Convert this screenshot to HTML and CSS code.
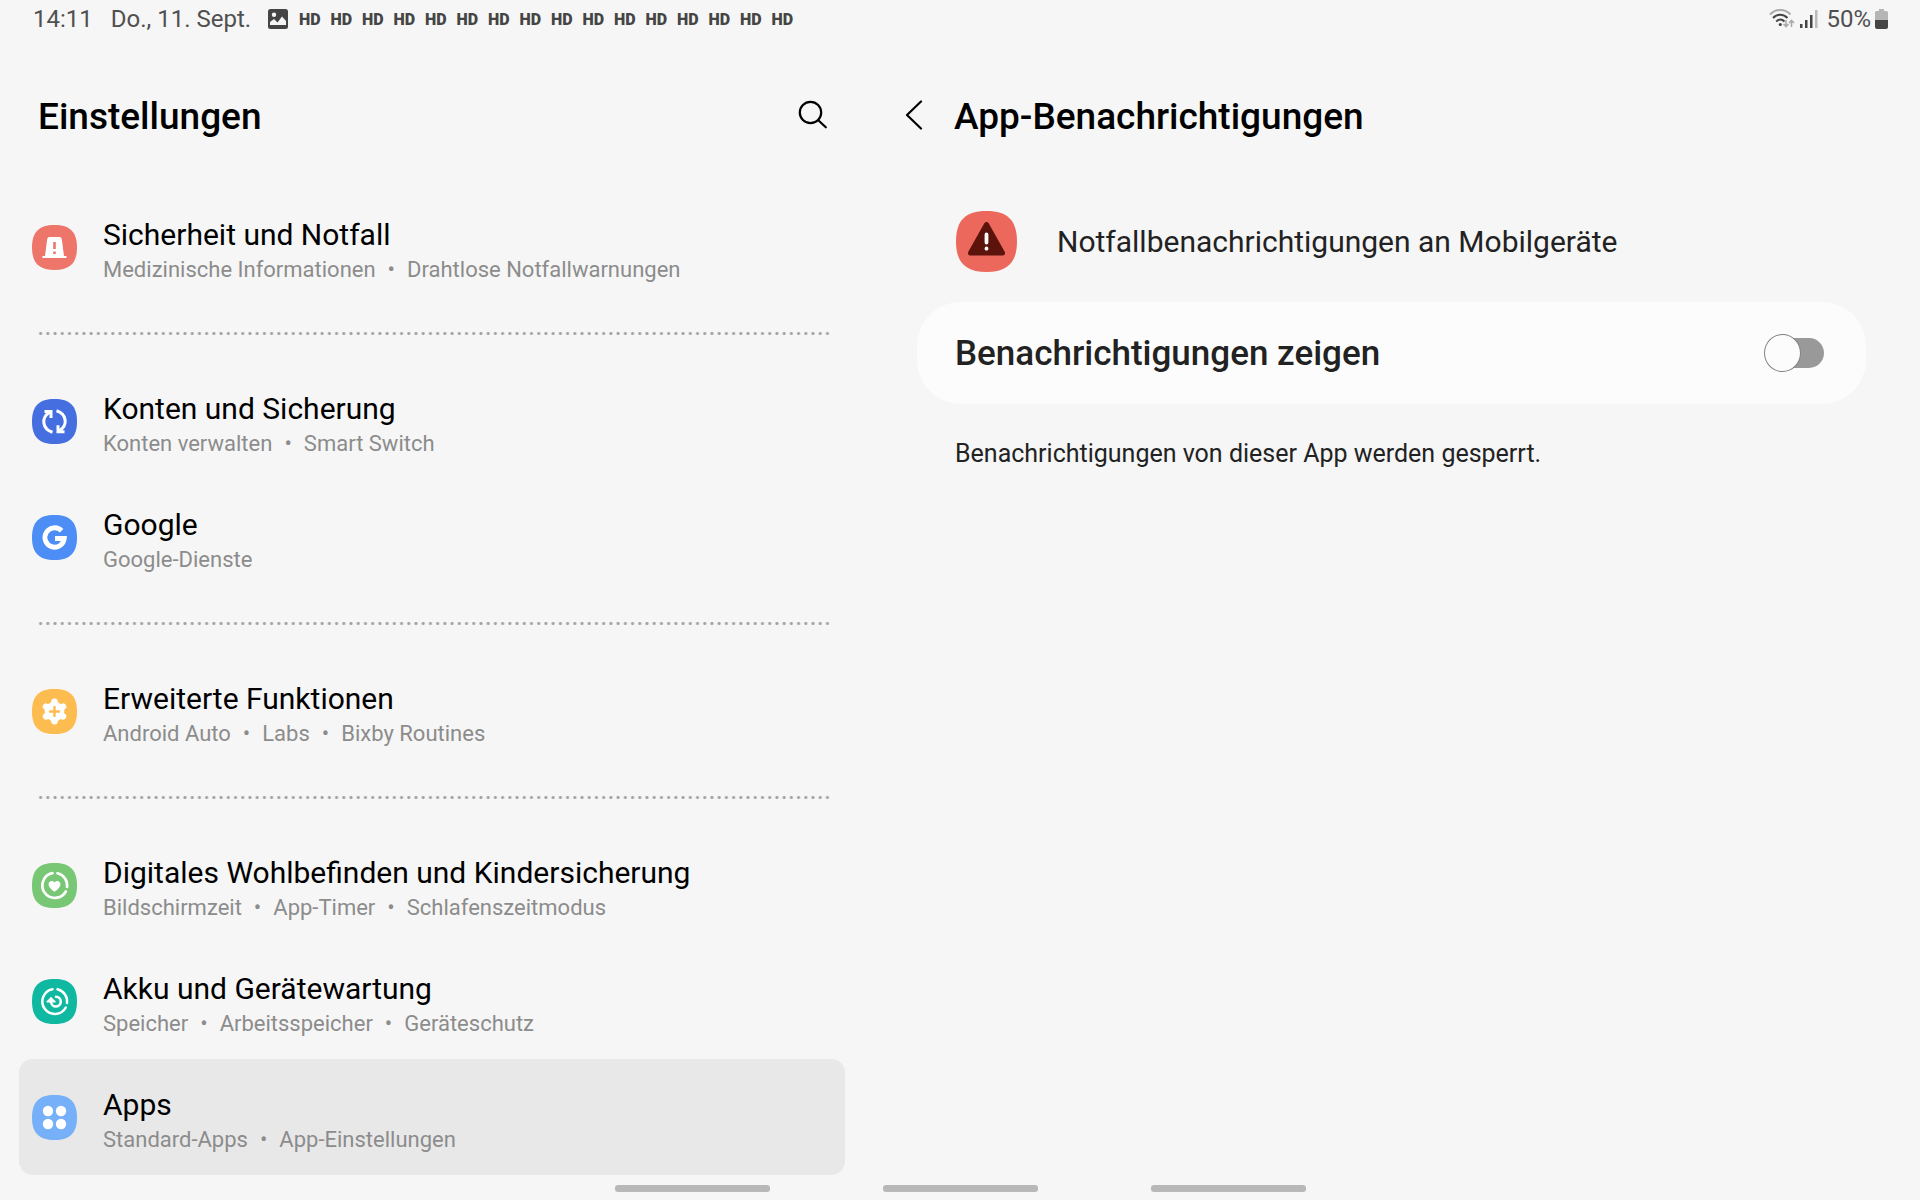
FILE: index.html
```html
<!DOCTYPE html>
<html lang="de">
<head>
<meta charset="utf-8">
<meta name="viewport" content="width=device-width, initial-scale=1">
<title>Einstellungen</title>
<link rel="stylesheet" href="styles.css">
</head>
<body>
<header class="status">
  <div class="status-side">
    <time class="clock">14:11</time>
    <span class="date">Do., 11. Sept.</span>
    <svg class="photo" width="20" height="20" viewBox="0 0 20 20" aria-hidden="true"><path fill="#454545" fill-rule="evenodd" d="M2.500 0h15A2.500 2.500 0 0 1 20 2.500v15a2.500 2.500 0 0 1-2.500 2.500h-15A2.500 2.500 0 0 1 0 17.500v-15A2.500 2.500 0 0 1 2.500 0ZM6 3.500a2.200 2.200 0 1 0 0 4.400 2.200 2.200 0 0 0 0-4.400ZM2 13v3h16v-4l-4-4.500-4.500 6L6 10Z"/></svg>
    <div class="hd-row">
      <span>HD</span><span>HD</span><span>HD</span><span>HD</span><span>HD</span><span>HD</span><span>HD</span><span>HD</span><span>HD</span><span>HD</span><span>HD</span><span>HD</span><span>HD</span><span>HD</span><span>HD</span><span>HD</span>
    </div>
  </div>
  <div class="status-side">
    <svg class="wifi" width="26" height="20" viewBox="0 0 26 20" fill="none" aria-hidden="true"><path d="M1 5.500C6.500-.5 16-.5 21.500 5.500" stroke="#aaa" stroke-width="2"/><path d="M4 9C8 4.500 14.500 4.500 18.500 9M7.200 12.500c2.500-2.700 5.800-2.700 8.300 0" stroke="#454545" stroke-width="2"/><circle cx="11.300" cy="15.500" r="1.600" fill="#454545"/><path d="M17 11v6.500m-2.500-2.500 2.500 2.500 2.500-2.500M22.500 18v-6.500M20 14l2.500-2.500L25 14" stroke="#aaa" stroke-width="1.600"/></svg>
    <svg class="signal" width="18" height="20" viewBox="0 0 18 20" aria-hidden="true"><path fill="#454545" d="M0 15h2.500v4H0zM5 11h2.500v8H5zM10 6h2.500v13H10z"/><path fill="#bbb" d="M15 1h2.500v18H15z"/></svg>
    <span>50%</span>
    <svg class="battery" width="13" height="20" viewBox="0 0 13 20" aria-hidden="true"><path fill="#b5b5b5" d="M4 0h5v2h2.500Q13 2 13 3.500V11H0V3.500Q0 2 1.500 2H4Z"/><path fill="#454545" d="M0 11h13v7q0 2-2 2H2q-2 0-2-2Z"/></svg>
  </div>
</header>
<main class="panes">
  <section class="pane-list">
    <div class="bar">
      <h1>Einstellungen</h1>
      <button class="icon-button" type="button" aria-label="Suchen"><svg width="30" height="30" viewBox="0 0 30 30" fill="none" stroke="#000" stroke-width="2.200" stroke-linecap="round" aria-hidden="true"><circle cx="12.500" cy="12.500" r="10.700"/><path d="m20.300 20.300 7.500 7"/></svg></button>
    </div>
    <nav class="menu" aria-label="Einstellungen">
      <a class="row" href="#sicherheit">
        <svg class="tile" viewBox="0 0 45 45" aria-hidden="true"><path fill="#ee756a" d="M22.500 0C38 0 45 7 45 22.500S38 45 22.500 45 0 38 0 22.500 7 0 22.500 0Z"/><path fill="#fff" d="M17.500 12h10q2 0 2.300 2l2.200 17h2.500v2h-24v-2H13l2.200-17q.3-2 2.300-2Z"/><path stroke="#ee756a" stroke-width="2.600" d="M22.500 17v7M22.500 26.500v2.600"/></svg>
        <span class="text"><span class="name">Sicherheit und Notfall</span><span class="details">Medizinische Informationen<i>•</i>Drahtlose Notfallwarnungen</span></span>
      </a>
      <hr>
      <a class="row" href="#konten">
        <svg class="tile" viewBox="0 0 45 45" aria-hidden="true"><path fill="#456fe0" d="M22.500 0C38 0 45 7 45 22.500S38 45 22.500 45 0 38 0 22.500 7 0 22.500 0Z"/><path fill="none" stroke="#fff" stroke-width="3" d="M20.500 33.200C10 30 9 18.500 17.500 13.500M24.500 11.800C35 15 36 26.500 27.500 31.500"/><path fill="none" stroke="#fff" stroke-width="3" d="M12.500 12.500H19v6.500M32.500 32.700H26v-6.500"/></svg>
        <span class="text"><span class="name">Konten und Sicherung</span><span class="details">Konten verwalten<i>•</i>Smart Switch</span></span>
      </a>
      <a class="row" href="#google">
        <svg class="tile" viewBox="0 0 45 45" aria-hidden="true"><path fill="#4d8df6" d="M22.500 0C38 0 45 7 45 22.500S38 45 22.500 45 0 38 0 22.500 7 0 22.500 0Z"/><path fill="none" stroke="#fff" stroke-width="4.800" d="M29.600 15.700A9.700 9.700 0 1 0 32.300 23.500H23"/></svg>
        <span class="text"><span class="name">Google</span><span class="details">Google-Dienste</span></span>
      </a>
      <hr>
      <a class="row" href="#erweitert">
        <svg class="tile" viewBox="0 0 45 45" aria-hidden="true"><path fill="#fdbc50" d="M22.500 0C38 0 45 7 45 22.500S38 45 22.500 45 0 38 0 22.500 7 0 22.500 0Z"/><circle cx="22.500" cy="22.500" r="9.800" fill="#fff"/><path stroke="#fff" stroke-width="6.500" stroke-linecap="round" d="M22.500 12.800v19.400M14 17.700l17 9.700M31 17.700l-17 9.700"/><path stroke="#fdbc50" stroke-width="2.400" stroke-linecap="round" d="M22.500 18v9M18 22.500h9"/></svg>
        <span class="text"><span class="name">Erweiterte Funktionen</span><span class="details">Android Auto<i>•</i>Labs<i>•</i>Bixby Routines</span></span>
      </a>
      <hr>
      <a class="row" href="#wohlbefinden">
        <svg class="tile" viewBox="0 0 45 45" aria-hidden="true"><path fill="#78c774" d="M22.500 0C38 0 45 7 45 22.500S38 45 22.500 45 0 38 0 22.500 7 0 22.500 0Z"/><path fill="none" stroke="#fff" stroke-width="2.700" stroke-linecap="round" d="M20.500 10.200A12.500 12.500 0 1 0 33.800 28.500M25.500 10.300A12.500 12.500 0 0 1 35 24"/><path fill="#fff" d="M22.500 28.800c-3.500-2.500-6-4.800-6-7.500 0-3.400 4.200-4.600 6-1.800 1.800-2.800 6-1.600 6 1.800 0 2.700-2.500 5-6 7.500Z"/></svg>
        <span class="text"><span class="name">Digitales Wohlbefinden und Kindersicherung</span><span class="details">Bildschirmzeit<i>•</i>App-Timer<i>•</i>Schlafenszeitmodus</span></span>
      </a>
      <a class="row" href="#akku">
        <svg class="tile" viewBox="0 0 45 45" aria-hidden="true"><path fill="#0fb8a0" d="M22.500 0C38 0 45 7 45 22.500S38 45 22.500 45 0 38 0 22.500 7 0 22.500 0Z"/><g fill="none" stroke="#fff" stroke-linecap="round"><path stroke-width="2.500" d="M20.500 10.200A12.500 12.500 0 1 0 33.800 28.500M25.500 10.300A12.500 12.500 0 0 1 35 24"/><path stroke-width="2.600" d="M24 17.700a4.900 4.900 0 1 1-5 5.300"/></g><path fill="#fff" d="m14.700 22.300 4.300-4.500 4.500 4.500v1.300h-8.800Z"/></svg>
        <span class="text"><span class="name">Akku und Gerätewartung</span><span class="details">Speicher<i>•</i>Arbeitsspeicher<i>•</i>Geräteschutz</span></span>
      </a>
      <a class="row selected" href="#apps" aria-current="page">
        <svg class="tile" viewBox="0 0 45 45" aria-hidden="true"><path fill="#76b0f8" d="M22.500 0C38 0 45 7 45 22.500S38 45 22.500 45 0 38 0 22.500 7 0 22.500 0Z"/><g fill="#fff"><circle cx="16" cy="16" r="5.200"/><circle cx="29" cy="16" r="5.200"/><circle cx="16" cy="29" r="5.200"/><circle cx="29" cy="29" r="5.200"/></g></svg>
        <span class="text"><span class="name">Apps</span><span class="details">Standard-Apps<i>•</i>App-Einstellungen</span></span>
      </a>
    </nav>
  </section>
  <section class="pane-detail">
    <div class="bar">
      <button class="icon-button" type="button" aria-label="Zurück"><svg width="18" height="30" viewBox="0 0 18 30" fill="none" stroke="#000" stroke-width="2.200" stroke-linecap="round" stroke-linejoin="round" aria-hidden="true"><path d="M16 1.500 2 15l14 13.500"/></svg></button>
      <h2>App-Benachrichtigungen</h2>
    </div>
    <div class="app">
      <svg width="61" height="61" viewBox="0 0 61 61" aria-hidden="true"><path fill="#ec685d" d="M30.500 0C51.500 0 61 9.500 61 30.500S51.500 61 30.500 61 0 51.500 0 30.500 9.500 0 30.500 0Z"/><path fill="#5c130c" stroke="#5c130c" stroke-width="5" stroke-linejoin="round" d="M30.500 13.500 46.500 42h-32Z"/><path stroke="#fff" stroke-width="3.800" stroke-linecap="round" d="M30.500 23.500v8M30.500 37.500v.2"/></svg>
      <span>Notfallbenachrichtigungen an Mobilgeräte</span>
    </div>
    <div class="card">
      <label for="show">Benachrichtigungen zeigen</label>
      <input class="switch" id="show" type="checkbox" role="switch">
    </div>
    <p class="note">Benachrichtigungen von dieser App werden gesperrt.</p>
  </section>
</main>
<footer class="gestures"><span></span><span></span><span></span></footer>
</body>
</html>
```
FILE: styles.css
```css
* { box-sizing: border-box; }

body {
  margin: 0;
  min-height: 100vh;
  display: flex;
  flex-direction: column;
  background: #f6f6f6;
  color: #000;
  font-family: Roboto, "Liberation Sans", sans-serif;
}

svg { display: block; flex: none; }

.status {
  display: flex;
  justify-content: space-between;
  padding: 0 32px 0 33px;
  color: #505050;
  font-size: 24px;
  line-height: 38px;
}

.status-side { display: flex; align-items: center; }
.date { margin-left: 18px; }
.photo { margin-left: 17px; }

.hd-row {
  display: grid;
  grid-template-columns: repeat(16, 1fr);
  width: 504px;
  padding-top: 2px;
  margin-left: 6px;
  color: #454545;
  font-size: 16px;
  font-weight: 900;
  line-height: 36px;
  text-align: center;
}

.signal { margin: 0 8px 0 5px; }
.battery { margin-left: 4px; }

.panes { flex: 1; display: grid; grid-template-columns: 45fr 55fr; }

.bar { display: flex; align-items: center; }

h1, h2 {
  margin: 0;
  font-size: 37px;
  font-weight: 500;
  line-height: 52px;
}

.icon-button {
  padding: 0 0 4px;
  border: 0;
  background: none;
}

.pane-list .bar {
  justify-content: space-between;
  padding: 53px 36px 46px 38px;
}

.menu { padding: 0 19px; }

.row {
  display: flex;
  align-items: center;
  gap: 26px;
  height: 116px;
  padding: 0 13px;
  border-radius: 14px;
  color: inherit;
  text-decoration: none;
}

.selected { background: #e8e8e8; }
.tile { width: 45px; height: 45px; }
.text { padding-top: 6px; }
.name, .details { display: block; white-space: nowrap; }
.name { font-size: 30px; line-height: 39px; }
.details { color: #8c8c8c; font-size: 22px; line-height: 32px; }
.details i { margin: 0 12px; font-style: normal; }

hr {
  height: 3px;
  margin: 27px 13px 28px 18px;
  border: 0;
  background: radial-gradient(circle, #a0a0a0 1px, transparent 2px) 0 0 / calc(100% / 110) 3px;
}

.pane-detail { padding: 0 54px 0 53px; color: #222; }

.pane-detail .bar {
  gap: 31px;
  padding: 53px 0 68px;
  margin-left: -12px;
  color: #000;
}

.app {
  display: flex;
  align-items: center;
  gap: 40px;
  padding: 0 39px 30px;
  font-size: 30px;
}

.card {
  display: flex;
  align-items: center;
  justify-content: space-between;
  padding: 24px 42px;
  border-radius: 44px;
  background: #fcfcfc;
  font-size: 35px;
  font-weight: 500;
  line-height: 52px;
}

.card label {
  flex: 1;
  padding-top: 2px;
  margin-left: -4px;
}

.switch {
  appearance: none;
  display: grid;
  align-items: center;
  width: 60px;
  height: 36px;
  margin: 0 0 2px;
}

.switch::before, .switch::after { content: ""; grid-area: 1 / 1; }

.switch::before {
  height: 30px;
  margin-left: 4px;
  border-radius: 15px;
  background: #999;
}

.switch::after {
  width: 35px;
  height: 36px;
  border: 1px solid #808080;
  border-radius: 50%;
  background: #fcfcfc;
}

.switch:checked::before { background: #456fe0; }
.switch:checked::after { justify-self: end; }

.note {
  margin: 34px 38px;
  font-size: 25px;
  line-height: 32px;
}

.gestures {
  display: flex;
  justify-content: center;
  gap: 113px;
  padding: 10px 0 8px;
}

.gestures span {
  width: 155px;
  height: 7px;
  border-radius: 3px;
  background: #b8b8b8;
}
```
